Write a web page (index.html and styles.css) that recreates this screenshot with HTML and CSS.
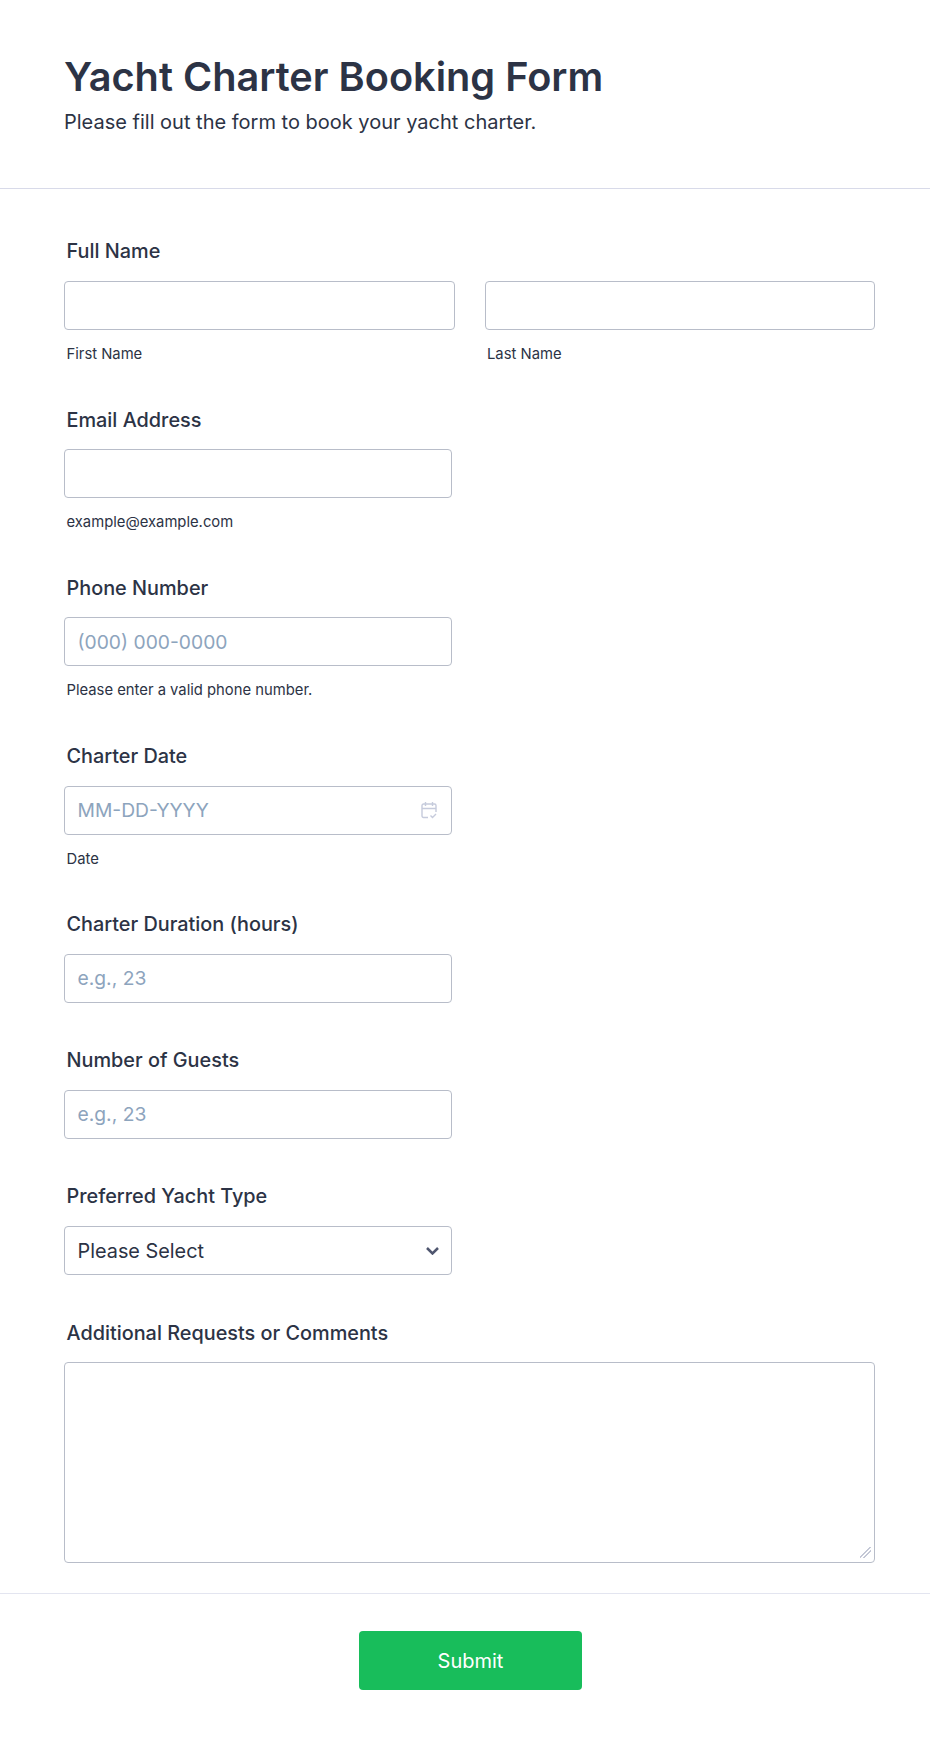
FILE: index.html
```html
<!DOCTYPE html>
<html>
<head>
    <title>Yacht Charter Booking Form</title>
    <link rel="stylesheet" href="styles.css">
</head>
<body>
    <form class="form">
        <div class="form-header">
            <h1>Yacht Charter Booking Form</h1>
            <p>Please fill out the form to book your yacht charter.</p>
        </div>
        <div class="form-body">
            <div class="field">
                <label class="field-label">Full Name</label>
                <div class="name-row">
                    <div class="name-col">
                        <input class="text-input" type="text">
                        <span class="sublabel">First Name</span>
                    </div>
                    <div class="name-col">
                        <input class="text-input" type="text">
                        <span class="sublabel">Last Name</span>
                    </div>
                </div>
            </div>
            <div class="field">
                <label class="field-label">Email Address</label>
                <input class="text-input half" type="text">
                <span class="sublabel">example@example.com</span>
            </div>
            <div class="field">
                <label class="field-label">Phone Number</label>
                <input class="text-input half" type="text" placeholder="(000) 000-0000">
                <span class="sublabel">Please enter a valid phone number.</span>
            </div>
            <div class="field">
                <label class="field-label">Charter Date</label>
                <div class="date-wrap half">
                    <input class="text-input" type="text" placeholder="MM-DD-YYYY">
                    <svg class="date-icon" width="16" height="18" viewBox="0 0 16 18" fill="none" stroke="#c6cbdc" stroke-width="1.4">
                        <path d="M7 16.500H2.500A1.500 1.500 0 0 1 1 15V4.500A1.500 1.500 0 0 1 2.500 3h11A1.500 1.500 0 0 1 15 4.500V11"/>
                        <path d="M1 7.500h14M4.500 1v4M11.500 1v4"/>
                        <path d="M9.500 14.500l2 2 3.500-3.500"/>
                    </svg>
                </div>
                <span class="sublabel">Date</span>
            </div>
            <div class="field">
                <label class="field-label">Charter Duration (hours)</label>
                <input class="text-input half" type="text" placeholder="e.g., 23">
            </div>
            <div class="field">
                <label class="field-label">Number of Guests</label>
                <input class="text-input half" type="text" placeholder="e.g., 23">
            </div>
            <div class="field">
                <label class="field-label">Preferred Yacht Type</label>
                <div class="select-box half">
                    <span>Please Select</span>
                    <svg width="13" height="8" viewBox="0 0 13 8" fill="none" stroke="#4f566f" stroke-width="2.500">
                        <path d="M1 1l5.500 5.500L12 1"/>
                    </svg>
                </div>
            </div>
            <div class="field">
                <label class="field-label">Additional Requests or Comments</label>
                <textarea class="text-area"></textarea>
            </div>
        </div>
        <div class="form-footer">
            <button type="button" class="submit-btn">Submit</button>
        </div>
    </form>
</body>
</html>
```

FILE: styles.css
```css
* {
    box-sizing: border-box;
}
body {
    margin: 0;
    background-color: #fff;
    color: #2c3345;
    font-family: Inter, "Liberation Sans", sans-serif;
}
.form-header {
    padding: 49px 64px 51px;
    border-bottom: 1px solid #d8dae9;
}
.form-header h1 {
    margin: 0;
    font-size: 39.7px;
    line-height: 56px;
    font-weight: 600;
}
.form-header p {
    margin: 2px 0 0;
    font-size: 20px;
    line-height: 30px;
}
.form-body {
    padding: 48px 55px 30px 64px;
}
.field {
    padding-bottom: 43.2px;
    display: flex;
    flex-direction: column;
    align-items: flex-start;
}
.field:last-child {
    padding-bottom: 0;
}
.field-label {
    margin: 0 0 15.6px 2.5px;
    padding-top: 0.4px;
    font-size: 19.85px;
    line-height: 28px;
    font-weight: 500;
}
.name-row {
    display: flex;
    gap: 30px;
    width: 100%;
}
.name-col {
    flex: 1;
    min-width: 0;
}
.text-input {
    display: block;
    width: 100%;
    height: 49px;
    padding: 0 12.5px;
    border: 1px solid #b8bdc9;
    border-radius: 4px;
    font-family: inherit;
    font-size: 19.3px;
    color: #2c3345;
    background-color: #fff;
}
.text-input::placeholder {
    color: #8da4bd;
    opacity: 1;
}
.half {
    width: 388px;
}
.sublabel {
    display: block;
    margin: 15px 0 -1px 2.5px;
    font-size: 14.8px;
    line-height: 18px;
    color: #2c3345;
}
.date-wrap {
    position: relative;
}
.date-icon {
    position: absolute;
    right: 15px;
    top: 15px;
}
.select-box {
    display: flex;
    align-items: center;
    justify-content: space-between;
    height: 49px;
    padding: 0 12px 0 12.5px;
    border: 1px solid #b8bdc9;
    border-radius: 4px;
    font-size: 19.85px;
}
.text-area {
    display: block;
    width: 100%;
    height: 201px;
    border: 1px solid #b8bdc9;
    border-radius: 4px;
    font-family: inherit;
}
.text-area::-webkit-resizer {
    background-image: linear-gradient(135deg, transparent 7px, #c4c8d6 7px, #c4c8d6 8.4px, transparent 8.4px, transparent 9.8px, #c4c8d6 9.8px, #c4c8d6 11.2px, transparent 11.2px);
    background-size: 11px 11px;
    background-position: 1px 0;
    background-repeat: no-repeat;
}
.form-footer {
    display: flex;
    justify-content: center;
    padding: 37px 0 48px 11px;
    border-top: 1px solid #e3e5f0;
}
.submit-btn {
    width: 223px;
    height: 59px;
    border: none;
    border-radius: 4px;
    background-color: #18bd5b;
    color: #fff;
    font-family: inherit;
    font-size: 20px;
    font-weight: 400;
}
```
